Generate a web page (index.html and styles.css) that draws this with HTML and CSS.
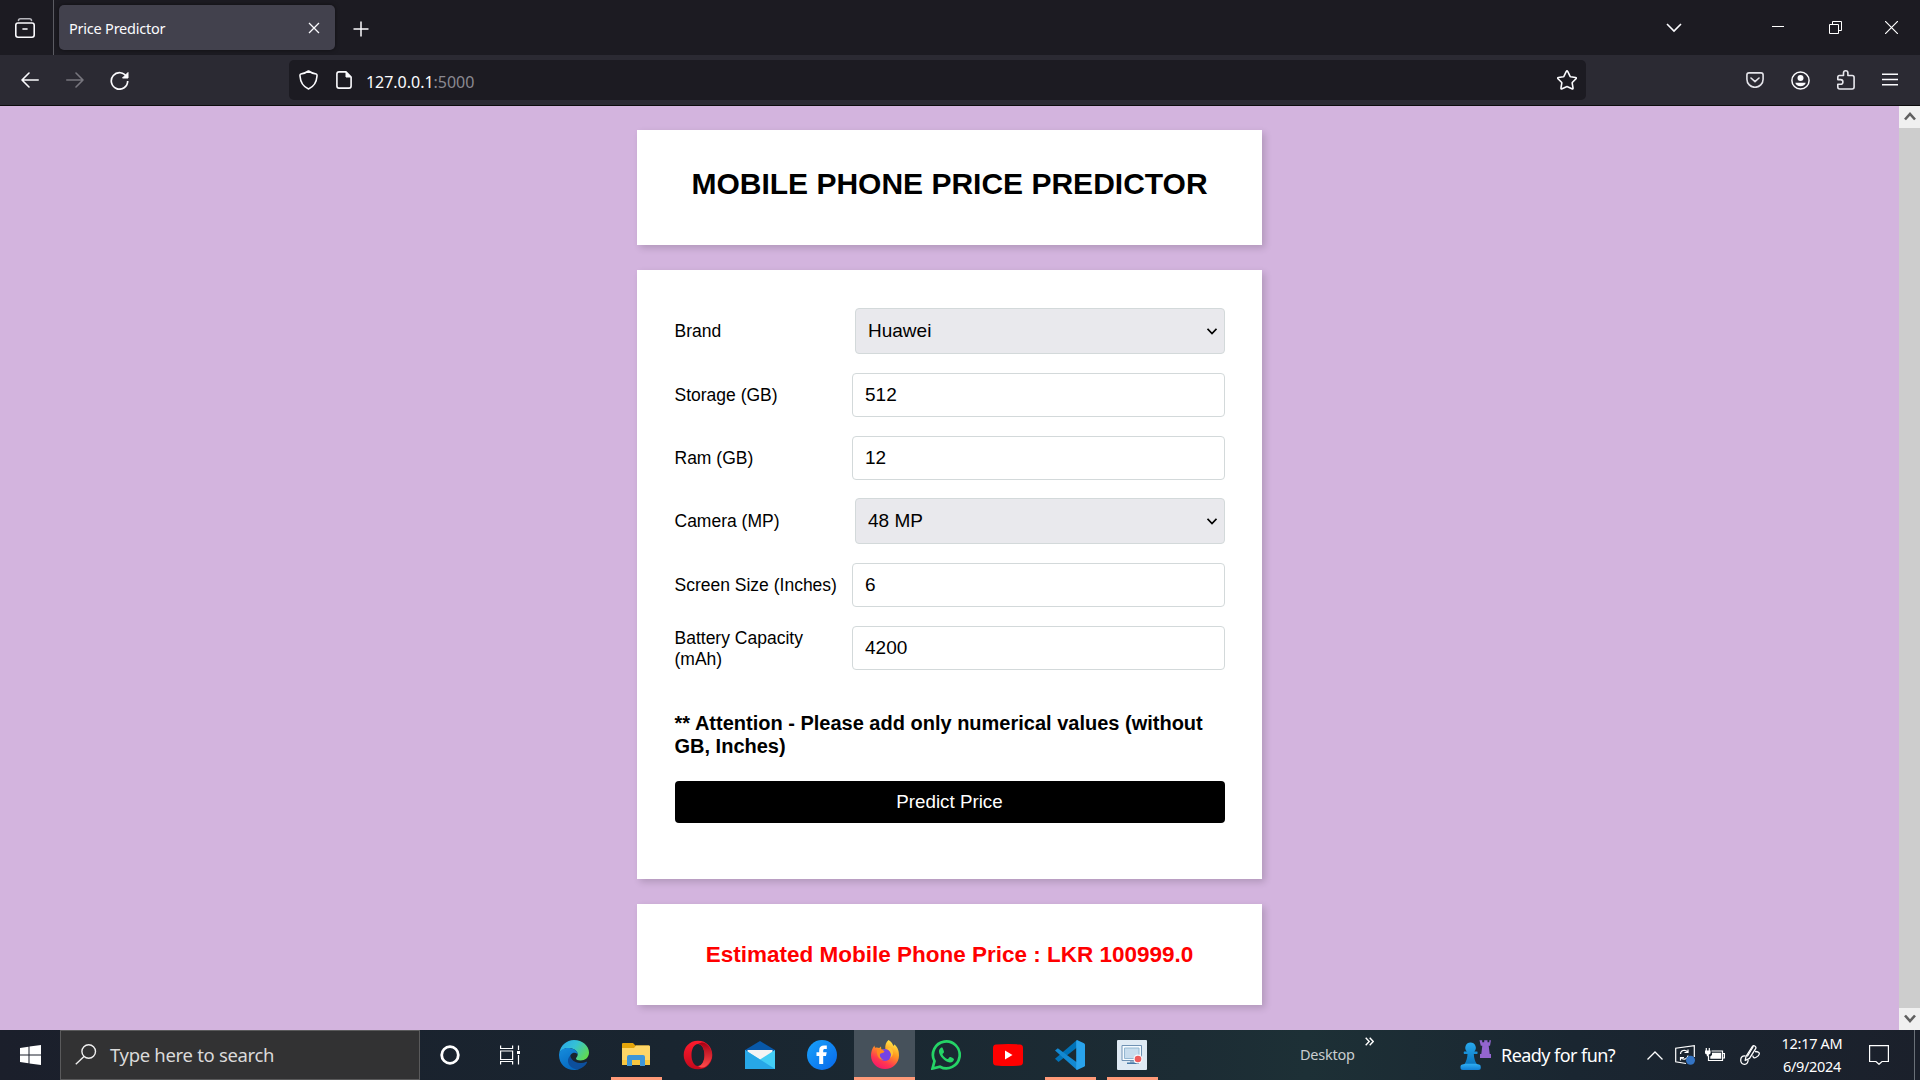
FILE: index.html
```html
<!DOCTYPE html>
<html lang="en">
<head>
<meta charset="utf-8">
<title>Price Predictor</title>
<link rel="stylesheet" href="styles.css">
</head>
<body>
<div class="screen">
  <header class="tabstrip">
    <div class="overview">
      <svg width="20" height="20" viewBox="0 0 20 20" fill="none" stroke="#fbfbfe" stroke-width="1.6" stroke-linecap="round"><path d="M3.500 2.500C3.500 1.300 4.500 .8 5.500 .8h9c1 0 2 .5 2 1.700" stroke="#b5b5bb"/><rect x=".8" y="5" width="18.400" height="14.200" rx="2.200"/><path d="M8 11h4"/></svg>
    </div>
    <div class="tab">
      <span class="tab-title">Price Predictor</span>
      <svg class="tab-close" width="12" height="12" viewBox="0 0 12 12" stroke="#fbfbfe" stroke-width="1.300"><path d="M1 1l10 10M11 1L1 11"/></svg>
    </div>
    <svg class="newtab" width="16" height="16" viewBox="0 0 16 16" stroke="#fbfbfe" stroke-width="1.500"><path d="M8 .5v15M.5 8h15"/></svg>
    <div class="window-buttons">
      <svg width="16" height="10" viewBox="0 0 16 10" fill="none" stroke="#fbfbfe" stroke-width="1.600"><path d="M1 1l7 7 7-7"/></svg>
      <svg class="minimize" width="12" height="13" viewBox="0 0 12 13" fill="#fff"><path d="M0 5h12v1H0z"/></svg>
      <svg class="restore" width="13" height="13" viewBox="0 0 13 13" fill="none" stroke="#fff"><path d="M.5 3.500h9v9h-9zM3.500 3.500v-3h9v9h-3"/></svg>
      <svg class="close" width="13" height="13" viewBox="0 0 13 13" stroke="#fff" stroke-width="1.200"><path d="M0 0l13 13M13 0L0 13"/></svg>
    </div>
  </header>
  <div class="toolbar">
    <svg class="back" width="18" height="16" viewBox="0 0 18 16" fill="none" stroke="#fbfbfe" stroke-width="1.600" stroke-linecap="round" stroke-linejoin="round"><path d="M8 1L1 8l7 7M1 8h16.200"/></svg>
    <svg class="forward" width="18" height="16" viewBox="0 0 18 16" fill="none" stroke="#77767e" stroke-width="1.600" stroke-linecap="round" stroke-linejoin="round"><path d="M10 1l7 7-7 7M17 8H.8"/></svg>
    <svg class="reload" width="19" height="19" viewBox="0 0 19 19" fill="none" stroke="#fbfbfe" stroke-width="1.700"><path d="M16.700 6A8.200 8.200 0 1 0 17.700 10"/><path d="M18 1.500V7h-5.500z" fill="#fbfbfe" stroke-width="1" stroke-linejoin="round"/></svg>
    <div class="urlbar">
      <svg class="shield" width="19" height="20" viewBox="0 0 19 20" fill="none" stroke="#fbfbfe" stroke-width="1.600" stroke-linejoin="round"><path d="M9.500 1C7 2.800 4.500 3.600 1.800 4 .8 4.200 .9 5 1 6c.4 6 3 10.600 8.500 13 5.500-2.400 8.100-7 8.500-13 .1-1 .2-1.800-.8-2C14.500 3.600 12 2.800 9.500 1z"/></svg>
      <svg class="doc" width="16" height="18" viewBox="0 0 16 18" fill="none" stroke="#fbfbfe" stroke-width="1.600" stroke-linejoin="round"><path d="M10 .9H3Q.9 .9 .9 3v12q0 2.100 2.100 2.100h10q2.100 0 2.100-2.100V6z"/><path d="M10 1v5h5z" fill="#fbfbfe" stroke-width="1"/></svg>
      <span class="url">127.0.0.1<span class="port">:5000</span></span>
      <svg class="star" width="20" height="20" viewBox="0 0 20 20" fill="none" stroke="#fbfbfe" stroke-width="1.600" stroke-linejoin="round"><path d="M9.200 1.600q.8-1.400 1.600 0L13 6.200q.2.500.7.600l4.800.7q1.400.3.500 1.300l-3.500 3.500q-.4.400-.3.900l.8 4.700q.2 1.500-1.100.9L10.500 16.700q-.5-.3-1 0l-4.400 2.100q-1.300.6-1.100-.9l.8-4.700q.1-.5-.3-.9L1 8.800Q.1 7.800 1.500 7.500l4.800-.7q.5-.1.7-.6z"/></svg>
    </div>
    <div class="tools">
      <svg width="18" height="16" viewBox="0 0 18 16" fill="none" stroke="#e4e4ea" stroke-width="1.600" stroke-linecap="round" stroke-linejoin="round"><path d="M3 .9h12q2.100 0 2.100 2.100v4.200A8.100 8.100 0 0 1 .9 7.200V3Q.9 .9 3 .9zM5 6l4 3.600L13 6"/></svg>
      <svg width="19" height="19" viewBox="0 0 19 19"><circle cx="9.500" cy="9.500" r="8.600" fill="none" stroke="#fbfbfe" stroke-width="1.500"/><circle cx="9.500" cy="7" r="3" fill="#fbfbfe"/><path d="M4.300 11.700h10.400c-.4 2-2.600 3.600-5.200 3.600s-4.800-1.600-5.200-3.600z" fill="#fbfbfe"/></svg>
      <svg width="18" height="20" viewBox="0 0 18 20" fill="none" stroke="#e8e8ee" stroke-width="1.600" stroke-linejoin="round"><path d="M2.500 5.500h4V3a2.200 2.200 0 0 1 4.400 0v2.500h4.200q2 0 2 2V17q0 2-2 2H2.800q-2 0-2-2v-2.800h2.800a2.300 2.300 0 0 0 0-4.600H.8V7.200q0-1.700 1.700-1.700z"/></svg>
      <svg width="16" height="14" viewBox="0 0 16 14" stroke="#fbfbfe" stroke-width="1.400"><path d="M0 1.200h16M0 6.500h16M0 11.800h16"/></svg>
    </div>
  </div>
  <div class="viewport">
    <main class="page">
      <section class="card heading-card"><h1>MOBILE PHONE PRICE PREDICTOR</h1></section>
      <section class="card form-card">
        <div class="row select-row"><label>Brand</label><div class="field select"><span>Huawei</span><svg width="10" height="7" viewBox="0 0 10 7" fill="none" stroke="#000" stroke-width="1.700"><path d="M.5 .8L5 5.500 9.500 .8"/></svg></div></div>
        <div class="row"><label>Storage (GB)</label><div class="field">512</div></div>
        <div class="row"><label>Ram (GB)</label><div class="field">12</div></div>
        <div class="row select-row"><label>Camera (MP)</label><div class="field select"><span>48 MP</span><svg width="10" height="7" viewBox="0 0 10 7" fill="none" stroke="#000" stroke-width="1.700"><path d="M.5 .8L5 5.500 9.500 .8"/></svg></div></div>
        <div class="row"><label>Screen Size (Inches)</label><div class="field">6</div></div>
        <div class="row"><label class="two-line">Battery Capacity<br>(mAh)</label><div class="field">4200</div></div>
        <h4>** Attention - Please add only numerical values (without GB, Inches)</h4>
        <button class="predict">Predict Price</button>
      </section>
      <section class="card result-card"><h3>Estimated Mobile Phone Price : LKR 100999.0</h3></section>
    </main>
    <div class="scrollbar">
      <div class="scroll-end"><svg width="12" height="9" viewBox="0 0 12 9" fill="none" stroke="#606060" stroke-width="2.600"><path d="M1 7.500l5-5.500 5 5.500"/></svg></div>
      <div class="scroll-thumb"></div>
      <div class="scroll-end"><svg width="12" height="9" viewBox="0 0 12 9" fill="none" stroke="#606060" stroke-width="2.600"><path d="M1 1.500L6 7l5-5.500"/></svg></div>
    </div>
  </div>
  <footer class="taskbar">
    <div class="start"><svg width="21" height="20" viewBox="0 0 21 20" fill="#fff"><path d="M0 3l8.500-1.200v7.700H0zM9.500 1.600L21 0v9.500H9.500zM0 10.500h8.500v7.700L0 17zM9.500 10.500H21V20L9.500 18.400z"/></svg></div>
    <div class="search">
      <svg width="22" height="21" viewBox="0 0 22 21" fill="none" stroke="#f0f0f0" stroke-width="1.400"><circle cx="13.700" cy="7.500" r="6.800"/><path d="M9 12.500L.8 20.300"/></svg>
      <span>Type here to search</span>
    </div>
    <div class="shell-btn"><svg width="20" height="20" viewBox="0 0 20 20"><circle cx="10" cy="10" r="8.300" fill="none" stroke="#fff" stroke-width="2.800"/></svg></div>
    <div class="shell-btn taskview"><svg width="20" height="20" viewBox="0 0 20 20" fill="none" stroke="#fff" stroke-width="1.200"><path d="M.6 .5v3h12V.5M.6 6h12v8.500H.6zM.6 19.500v-3h12v3M18.500 .5V5M18.500 10v9.500"/><path d="M17 6h3v3h-3z" fill="#fff" stroke="none"/></svg></div>
    <div class="apps">
      <div class="app"><svg width="30" height="30" viewBox="0 0 30 30">
        <defs><linearGradient id="ea" x1="0" y1=".2" x2="1" y2=".7"><stop offset="0" stop-color="#2aa8e8"/><stop offset=".45" stop-color="#35c1d5"/><stop offset="1" stop-color="#62dc4b"/></linearGradient><linearGradient id="eb" x1="0" y1="0" x2=".5" y2="1"><stop offset="0" stop-color="#168ddd"/><stop offset="1" stop-color="#0669c0"/></linearGradient></defs>
        <path d="M.3 13C1.500 5.500 7.500 0 15 0c8.500 0 15 6 15 12.500 0 5-4 8-8.500 8-3 0-4.500-1-4.500-2 0-.8 1.700-1.500 1.700-4.200C18.700 10.500 14 8 9.500 8 5.500 8 2 10 .3 13z" fill="url(#ea)"/>
        <path d="M0 15C0 10.500 4.500 8 9 8c5 0 9.700 2.500 9.700 6.300 0 0-2-2.300-4.700-1.300-3 1-4 4.500-2.500 8.500 1.200 3.500 5 7 9 7.200C18.500 29.800 16.500 30 15 30 7 30 0 24 0 15z" fill="url(#eb)"/>
        <path d="M11.300 15.500c-5 5-1.500 12.500 6 13.900C22.500 29 26.500 26 28 22.500c.3-.7-.3-1-.8-.7-2 1.100-4.200 1.500-6.500 1.200-5-.5-9-3.300-9.400-7.500z" fill="#0d4f9c"/></svg></div>
      <div class="app open"><svg width="30" height="30" viewBox="0 0 30 30"><path d="M1 4q0-1 1-1h10l2.500 2.500H28V9H1z" fill="#e5a50a"/><path d="M1 8h12l2-2.500h13q1 0 1 1V25H1z" fill="#ffd667"/><path d="M1 20h28v5H1z" fill="#f7c640"/><path d="M6 26V17q0-2 2-2h14q2 0 2 2v9h-5v-6h-8v6z" fill="#3e96d8"/></svg></div>
      <div class="app"><svg width="30" height="30" viewBox="0 0 30 30"><defs><linearGradient id="op" x1="0" y1="0" x2="0" y2="1"><stop offset="0" stop-color="#ff1b2d"/><stop offset="1" stop-color="#c3091c"/></linearGradient><linearGradient id="oq" x1="0" y1="0" x2="0" y2="1"><stop offset="0" stop-color="#a70014"/><stop offset="1" stop-color="#ff4b4b"/></linearGradient></defs><path fill-rule="evenodd" d="M15 .7C6.500.7.700 7 .700 15S6.500 29.300 15 29.300 29.300 23 29.300 15 23.500.7 15 .7zM15 4c4 0 6.500 5 6.500 11S19 26 15 26s-6.500-5-6.500-11S11 4 15 4z" fill="url(#op)"/><path d="M15 4c3-2 5.500-2 8-.3 8 6 8 16.600 0 22.600-2.500 1.700-5 1.700-8-.3 4 0 6.500-5 6.500-11S19 4 15 4z" fill="url(#oq)"/></svg></div>
      <div class="app"><svg width="30" height="30" viewBox="0 0 30 30"><path d="M0 10L15 1l15 9v7H0z" fill="#0858a8"/><path d="M2.500 10h25v10h-25z" fill="#f4f4f4"/><path d="M0 10l15 9.500L30 10v19H0z" fill="#43cdf5"/><path d="M0 10l30 19H0z" fill="#27a7e7"/></svg></div>
      <div class="app"><svg width="30" height="30" viewBox="0 0 30 30"><defs><linearGradient id="fb" x1="0" y1="0" x2="1" y2="1"><stop offset="0" stop-color="#18a2fa"/><stop offset="1" stop-color="#0868ea"/></linearGradient></defs><circle cx="15" cy="15" r="15" fill="url(#fb)"/><path d="M12.200 24v-8H9.500v-3.800h2.700v-2C12.200 7 14 5.500 17 5.500h2.800V9h-1.900c-1.300 0-1.700.6-1.700 1.500v1.700h3.500L19 16h-2.800v8z" fill="#fff"/></svg></div>
      <div class="app open active"><svg width="30" height="30" viewBox="0 0 30 30"><defs><linearGradient id="ff" x1=".8" y1="0" x2=".3" y2="1"><stop offset="0" stop-color="#fff44f"/><stop offset=".4" stop-color="#ff9a1f"/><stop offset=".75" stop-color="#ff3750"/><stop offset="1" stop-color="#f5156c"/></linearGradient></defs><path d="M18.500 0c3.500 2 4 4 5 6 1-1 .8-1.800.8-1.800C28 7.500 29 11 29 15.500 29 23 23 29 15 29S1 23 1 15.500C1 12 2 8.500 4.500 5.500c0 1 .3 1.500.7 2.200 1.600-.5 2.700-.3 4 .2L11 6.500l.3 3 4-.3C15 5 16 2 18.500 0z" fill="url(#ff)"/><circle cx="15" cy="15" r="6" fill="#7542e5"/><path d="M7 9.500c4-1 6.500.2 7.500 2.300-1.700 1.600-3.500 1.200-4.500 2.200-.6 2.400 1 5.200 4 5.800-4 .3-8-3-7-10.300z" fill="#ff8a1f"/><path d="M17 9c4 2 5 6 3 9 4-2.500 4-7.500.5-10.500z" fill="#ffc334"/></svg></div>
      <div class="app"><svg width="30" height="30" viewBox="0 0 30 30"><path d="M1.500 28.500l2-7.300A13.400 13.400 0 1 1 9 26.700z" fill="none" stroke="#25d366" stroke-width="2.700"/><path d="M10.700 7.500c-.7 0-3 1.500-2.700 4.500.4 4 6 10 10.800 10.500 2.400.2 4.200-1.700 4.200-3.200 0-.8-3-2.300-4-2.300-.8 0-1.500 2-2.200 2-1.500 0-5-3.200-5.300-4.600-.1-.8 1.500-1.400 1.500-2.400 0-.8-1.200-4-1.500-4.300-.2-.2-.5-.2-.8-.2z" fill="#25d366"/></svg></div>
      <div class="app"><svg width="30" height="30" viewBox="0 0 30 30"><path d="M3 4.500q12-1 24 0 3 .3 3 3.500v14q0 3.200-3 3.500-12 1-24 0-3-.3-3-3.500V8q0-3.200 3-3.500z" fill="#f00"/><path d="M12 10.500l7.500 4.500-7.500 4.500z" fill="#fff"/></svg></div>
      <div class="app open"><svg width="30" height="30" viewBox="0 0 30 30"><path d="M0 18.800L22 0v7.500L3.500 22z" fill="#0072b8"/><path d="M0 10.500l2.800-2.300L22 22.500V30z" fill="#1389d2"/><path d="M22 0l7 3.200q1 .5 1 1.500v20.600q0 1-1 1.500L22 30q-.8-.5-.8-1.500v-27Q21.200.5 22 0z" fill="#29a3ec"/></svg></div>
      <div class="app open"><svg width="30" height="30" viewBox="0 0 30 30"><rect width="30" height="30" rx="1" fill="#dfeaf4"/><path d="M5 5.500h19.500V20.500H5z" fill="#f5fbff" stroke="#7092b4"/><path d="M7.500 8h14.500v10.500H7.500z" fill="#c7dced" stroke="#94b7d2"/><path d="M13 21h4v2h-4z" fill="#9bb6cf"/><path d="M10 22.500h12v1.500H10z" fill="#4679a7"/><circle cx="21" cy="19" r="4.500" fill="#f7fbff"/><circle cx="21" cy="19" r="3.300" fill="#ec5c5c"/></svg></div>
    </div>
    <div class="desktop">Desktop</div>
    <svg class="more" width="9" height="9" viewBox="0 0 9 9" fill="none" stroke="#fff" stroke-width="1.400"><path d="M.7 .7l3.500 3.800L.7 8.300M4.700 .7l3.500 3.800-3.500 3.800"/></svg>
    <div class="widget">
      <svg width="31" height="30" viewBox="0 0 31 30"><defs><linearGradient id="pw" x1="0" y1="0" x2="0" y2="1"><stop offset="0" stop-color="#28a9ee"/><stop offset=".75" stop-color="#0b78c0"/><stop offset=".8" stop-color="#2ca9ef"/><stop offset="1" stop-color="#117fd4"/></linearGradient></defs><path d="M19.500.3h2.700v2h2V.3h3.300v2h1.800V.3H31l-1 5.500h-1.300l1 8.200H31v4H20v-4h1.300l1-8.200H20.800z" fill="#9365cf"/><path d="M10.500 2.500a5.300 5.300 0 0 1 3.800 9h3q.7 1.300 0 2.500h-3.500c.2 4 1 6.800 3 10 3.500.3 4 1.500 4 3.500 0 1.700-.7 2.500-2.500 2.500H3c-1.800 0-2.500-.8-2.500-2.500 0-2 .5-3.200 4-3.500 2-3.200 2.800-6 3-10H4q-.7-1.200 0-2.500h2.800a5.300 5.300 0 0 1 3.700-9z" fill="url(#pw)"/></svg>
      <span>Ready for fun?</span>
    </div>
    <div class="tray">
      <svg class="up" width="16" height="9" viewBox="0 0 16 9" fill="none" stroke="#fff" stroke-width="1.300"><path d="M.5 8.500L8 1l7.500 7.500"/></svg>
      <svg class="sync" width="20" height="20" viewBox="0 0 20 20" fill="none" stroke="#fff" stroke-width="1.200"><path d="M11 18.500L.7 16.800V3.200L19.300.7V12"/><path d="M5.500 9c0-3.500 4.500-5 7-2.200M13 4.500V7.500H9.500M13 10.500c-.5 3.500-4.500 5-7 2.200M5.500 15.500v-3H9"/><circle cx="15.500" cy="15.200" r="4.500" fill="#3474c4" stroke="none"/></svg>
      <svg class="battery" width="20" height="15" viewBox="0 0 20 15" fill="none" stroke="#fff" stroke-width="1.200"><path d="M6.500 3h11v9.500h-14V8M18 5.500h1.400V10H18M1.300 0v3M4.300 0v3"/><path d="M0 2.500h5.600v2.300q0 1.700-1.800 1.700v1.700h-2V6.500Q0 6.500 0 4.800zM7 4.800h9.200v6H5.300V8.500L7 7z" fill="#fff" stroke="none"/></svg>
      <svg class="pen" width="20" height="20" viewBox="0 0 20 20" fill="none" stroke="#fff" stroke-width="1.300" stroke-linejoin="round"><path d="M5.200 15.500L6 11.500 12.300 1.600q1-1.300 2.500-.6t1 2.400L9.500 13.300z"/><path d="M13.300 1.500L7.300 11.500M5.500 11C2.500 10.500.7 12 .7 15s1.800 4.500 4 4.300 3.300-2 3.500-4.600M15 6.500c3.500 0 4.500 1 4.300 2.500s-2 2.800-3.500 3.500-2.800.3-3-2"/></svg>
      <div class="clock"><div>12:17 AM</div><div>6/9/2024</div></div>
      <svg class="notify" width="20" height="20" viewBox="0 0 20 20" fill="none" stroke="#fff" stroke-width="1.200"><path d="M.6 .6h18.800v15.900h-6.400L10 19.300 7 16.500H.6z"/></svg>
    </div>
    <div class="show-desktop"></div>
  </footer>
</div>
</body>
</html>
```
FILE: styles.css
```css
* { box-sizing: border-box; }
body { margin: 0; font-family: "Liberation Sans", Arial, sans-serif; }
svg { display: block; flex: none; }
.screen { width: 1920px; height: 1080px; display: flex; flex-direction: column; overflow: hidden; }

/* Browser tabs */
.tabstrip { height: 55px; flex: none; display: flex; align-items: center; background: #1c1b22; font-family: "Noto Sans", sans-serif; }
.overview { width: 54px; height: 55px; padding: 18px 0 0 15px; border-right: 1px solid #5b5b62; }
.tab { width: 276px; height: 45px; margin-left: 5px; padding: 0 15px 0 10px; display: flex; align-items: center; justify-content: space-between; background: #42414d; border-radius: 5px; box-shadow: 0 0 4px rgba(0, 0, 0, .5); }
.tab-title { font-size: 14.5px; letter-spacing: -.22px; color: #fbfbfe; white-space: nowrap; }
.newtab { margin: 2px 0 0 18px; }
.window-buttons { flex: 1; display: flex; align-items: center; justify-content: flex-end; padding-right: 22px; }
.minimize { margin-left: 90px; }
.restore { margin-left: 45px; }
.close { margin-left: 43px; }

/* Navigation toolbar */
.toolbar { height: 51px; flex: none; display: flex; align-items: center; background: #2b2a33; border-bottom: 1px solid #0c0c0d; padding-left: 21px; font-family: "Noto Sans", sans-serif; }
.forward { margin-left: 27px; }
.reload { margin-left: 26px; }
.urlbar { width: 1297px; height: 40px; margin-left: 160px; padding: 0 9px 0 10px; display: flex; align-items: center; background: #1c1b22; border-radius: 5px; }
.doc { margin-left: 18px; }
.url { flex: 1; margin: 3px 0 0 14px; font-size: 16px; letter-spacing: -.03px; color: #fbfbfe; }
.port { color: #8a8991; }
.tools { flex: 1; display: flex; align-items: center; justify-content: flex-end; gap: 27px; padding-right: 22px; }

/* Page */
.viewport { flex: 1; min-height: 0; display: flex; background: #d3b4de; }
.page { flex: 1; display: flex; flex-direction: column; align-items: center; gap: 25px; padding-top: 24px; }
.card { width: 625px; background: #fff; box-shadow: 3px 3px 7px rgba(0, 0, 0, .16); }
.heading-card { height: 115px; padding-top: 37px; text-align: center; }
h1 { margin: 0; font-size: 30px; line-height: 34px; color: #000; }
.form-card { height: 609px; padding: 38px 37px 0 37.5px; }
.row { display: flex; align-items: center; justify-content: space-between; height: 44px; margin-bottom: 18.75px; }
.select-row { height: 46px; }
.row label { font-size: 17.5px; line-height: 21px; white-space: nowrap; padding-top: 1px; }
.row .two-line { padding-top: 2px; }
.field { width: 373px; height: 100%; display: flex; align-items: center; padding: 0 12px; border: 1px solid #d3d9da; border-radius: 4px; font-size: 19px; line-height: 22px; background: #fff; }
.select { width: 370px; padding-right: 7px; justify-content: space-between; background: #e9e9ed; }
h4 { margin: 42.5px 0 23px; font-size: 20px; line-height: 23px; }
.predict { display: block; width: 550px; height: 42px; padding: 0; border: 0; border-radius: 4px; background: #000; color: #fff; font: 18.75px/22px "Liberation Sans", Arial, sans-serif; }
.result-card { height: 101px; padding-top: 38px; text-align: center; }
h3 { margin: 0; font-size: 22.5px; line-height: 26px; color: #f00; }
.scrollbar { width: 21px; display: flex; flex-direction: column; background: #f0f0f0; }
.scroll-end { height: 22px; flex: none; display: flex; align-items: center; justify-content: center; padding-bottom: 1px; }
.scroll-thumb { flex: 1; background: #cdcdcd; }

/* Desktop taskbar */
.taskbar { height: 50px; flex: none; display: flex; align-items: center; background: linear-gradient(90deg, #1b1f2b, #192530 35%, #1c2c34 62%, #1d3036 68%, #1a2631 82%, #1b202b); color: #fff; font-family: "Noto Sans", sans-serif; }
.start { width: 60px; padding-left: 20px; }
.search { width: 360px; height: 50px; display: flex; align-items: center; gap: 13px; padding: 0 0 2px 14px; border: 1px solid #5a5a5b; background: #323233; color: #dadada; font-size: 18.5px; letter-spacing: -.32px; }
.shell-btn { width: 60px; display: flex; justify-content: center; }
.apps { display: flex; margin-left: 3px; }
.app { width: 62px; height: 50px; padding-top: 10px; display: flex; justify-content: center; background: linear-gradient(#ff9a78, #ff9a78) center bottom / 0 3px no-repeat; }
.app.open { background-size: 51px 3px; }
.app.active { width: 61px; margin-left: 1px; background-color: #46515b; background-size: 61px 3px; }
.desktop { width: 56px; margin: -2px 0 0 137px; font-size: 14.500px; letter-spacing: -.25px; color: #c9cdd0; }
.more { margin: -27px 0 0 9px; }
.widget { display: flex; align-items: center; gap: 10px; margin-left: 86px; width: 156px; font-size: 18px; letter-spacing: -.55px; white-space: nowrap; }
.tray { flex: 1; display: flex; align-items: center; }
.up { margin-left: 31px; }
.sync { margin-left: 12px; }
.battery { margin-left: 10px; }
.pen { margin-left: 15px; }
.clock { width: 64px; margin: -1px 0 0 20px; font-size: 14.500px; line-height: 23px; letter-spacing: -.3px; text-align: center; white-space: nowrap; }
.notify { margin-left: 25px; }
.show-desktop { width: 6px; height: 50px; border-left: 1px solid #6a7078; }
```
